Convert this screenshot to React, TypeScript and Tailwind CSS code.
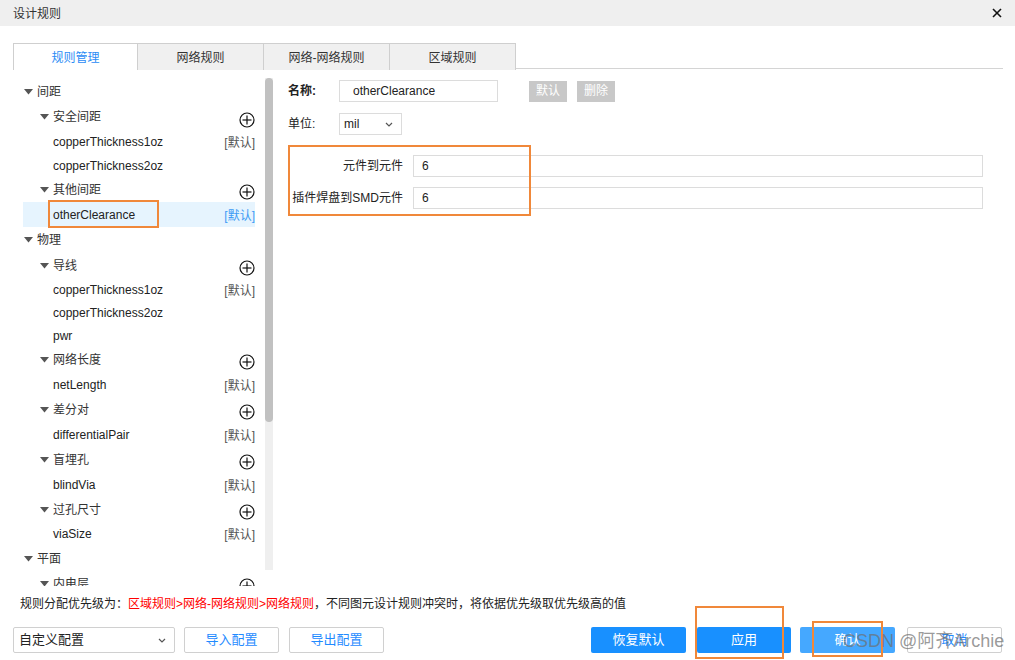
import React from 'react'

type Row = {
  kind: 'g0' | 'g1' | 'leaf'
  label: string
  h: number
  plus?: boolean
  def?: boolean
  selected?: boolean
}

const rows: Row[] = [
  { kind: 'g0', label: '间距', h: 25 },
  { kind: 'g1', label: '安全间距', h: 26, plus: true },
  { kind: 'leaf', label: 'copperThickness1oz', h: 24, def: true },
  { kind: 'leaf', label: 'copperThickness2oz', h: 23 },
  { kind: 'g1', label: '其他间距', h: 25, plus: true },
  { kind: 'leaf', label: 'otherClearance', h: 25, def: true, selected: true },
  { kind: 'g0', label: '物理', h: 26 },
  { kind: 'g1', label: '导线', h: 25, plus: true },
  { kind: 'leaf', label: 'copperThickness1oz', h: 24, def: true },
  { kind: 'leaf', label: 'copperThickness2oz', h: 22 },
  { kind: 'leaf', label: 'pwr', h: 23 },
  { kind: 'g1', label: '网络长度', h: 25, plus: true },
  { kind: 'leaf', label: 'netLength', h: 25, def: true },
  { kind: 'g1', label: '差分对', h: 25, plus: true },
  { kind: 'leaf', label: 'differentialPair', h: 25, def: true },
  { kind: 'g1', label: '盲埋孔', h: 25, plus: true },
  { kind: 'leaf', label: 'blindVia', h: 25, def: true },
  { kind: 'g1', label: '过孔尺寸', h: 25, plus: true },
  { kind: 'leaf', label: 'viaSize', h: 24, def: true },
  { kind: 'g0', label: '平面', h: 25 },
  { kind: 'g1', label: '内电层', h: 25, plus: true },
]

const tabs = ['规则管理', '网络规则', '网络-网络规则', '区域规则']

function Caret() {
  return (
    <svg width="9" height="6" viewBox="0 0 9 6" className="shrink-0">
      <polygon points="0,0 9,0 4.5,5.5" fill="#555" />
    </svg>
  )
}

function PlusCircle() {
  return (
    <svg width="16" height="16" viewBox="0 0 16 16" className="mt-[5px]">
      <circle cx="8" cy="8" r="7" fill="none" stroke="#111" strokeWidth="1.2" />
      <line x1="3.5" y1="8" x2="12.5" y2="8" stroke="#111" strokeWidth="1.2" />
      <line x1="8" y1="3.5" x2="8" y2="12.5" stroke="#111" strokeWidth="1.2" />
    </svg>
  )
}

function Chevron() {
  return (
    <svg width="8" height="5" viewBox="0 0 8 5">
      <polyline points="1,1 4,4 7,1" fill="none" stroke="#555" strokeWidth="1.2" />
    </svg>
  )
}

export default function App() {
  return (
    <div
      className="relative w-[1015px] h-[660px] bg-white overflow-hidden text-[12px] text-[#333]"
      style={{ fontFamily: '"Liberation Sans", "Noto Sans CJK SC", sans-serif' }}
    >
      {/* Title bar */}
      <div className="h-[26px] bg-[#efefef] flex items-center justify-between pl-[13px] pr-[13px]">
        <span className="text-[12px] text-[#333] mt-[1px]">设计规则</span>
        <svg width="10" height="10" viewBox="0 0 10 10">
          <line x1="1" y1="1" x2="9" y2="9" stroke="#111" strokeWidth="1.6" />
          <line x1="9" y1="1" x2="1" y2="9" stroke="#111" strokeWidth="1.6" />
        </svg>
      </div>

      {/* Tabs */}
      <div className="pt-[17px] pl-[13px] pr-[12px]">
        <div className="flex h-[26px] border-b border-[#d4d4d4]">
          {tabs.map((t, i) => (
            <div
              key={t}
              className={`h-[27px] flex items-center justify-center text-[12px] border-t border-r border-[#cfcfcf] ${
                i === 0 ? 'w-[125px] bg-white text-[#2b8cf5] border-l' : 'w-[126px] bg-[#f0f0f0] text-[#333] h-[26px]'
              }`}
            >
              <span className="mt-[2px]">{t}</span>
            </div>
          ))}
        </div>
      </div>

      {/* Main */}
      <div className="flex h-[521px]">
        {/* Tree */}
        <div className="w-[232px] ml-[23px] mt-[10px] h-[507px] overflow-hidden">
          {rows.map((r, i) => (
            <div
              key={i}
              className={`flex items-center justify-between ${r.selected ? 'bg-[#e6f4fe]' : ''}`}
              style={{ height: r.h }}
            >
              <div
                className={`flex items-center gap-[4px] ${
                  r.kind === 'g0' ? 'pl-[1px]' : r.kind === 'g1' ? 'pl-[17px]' : 'pl-[30px]'
                }`}
              >
                {r.kind !== 'leaf' && <Caret />}
                <span className={r.kind === 'leaf' ? 'text-[#222]' : 'text-[#333]'}>{r.label}</span>
              </div>
              <div className="flex items-center">
                {r.plus && <PlusCircle />}
                {r.def && (
                  <span className={`mt-[2px] ${r.selected ? 'text-[#3d9bf5]' : 'text-[#555]'}`}>[默认]</span>
                )}
              </div>
            </div>
          ))}
        </div>

        {/* Scrollbar */}
        <div className="w-[8px] h-[492px] ml-[10px] mt-[9px] bg-[#efefef] flex flex-col">
          <div className="h-[344px] bg-[#c1c1c1] rounded-[4px]" />
        </div>

        {/* Right form */}
        <div className="flex-1 pl-[15px] pt-[11px]">
          <div className="flex items-center h-[22px]">
            <span className="w-[51px] font-bold text-[#222]">名称:</span>
            <div className="w-[159px] h-[22px] border border-[#dcdcdc] flex items-center pl-[13px] text-[#222]">
              otherClearance
            </div>
            <div className="ml-[31px] w-[38px] h-[21px] bg-[#c8c8c8] text-white flex items-center justify-center">
              默认
            </div>
            <div className="ml-[10px] w-[38px] h-[21px] bg-[#c8c8c8] text-white flex items-center justify-center">
              删除
            </div>
          </div>
          <div className="flex items-center h-[22px] mt-[11px]">
            <span className="w-[51px] text-[#222]">单位:</span>
            <div className="w-[63px] h-[22px] border border-[#dcdcdc] flex items-center justify-between pl-[4px] pr-[8px] text-[#222]">
              <span>mil</span>
              <Chevron />
            </div>
          </div>
          <div className="flex items-center h-[22px] mt-[20px]">
            <span className="w-[115px] text-right text-[#222]">元件到元件</span>
            <div className="ml-[10px] w-[570px] h-[22px] border border-[#dcdcdc] flex items-center pl-[8px] text-[#222]">
              6
            </div>
          </div>
          <div className="flex items-center h-[22px] mt-[10px]">
            <span className="w-[115px] text-right text-[#222] whitespace-nowrap">插件焊盘到SMD元件</span>
            <div className="ml-[10px] w-[570px] h-[22px] border border-[#dcdcdc] flex items-center pl-[8px] text-[#222]">
              6
            </div>
          </div>
        </div>
      </div>

      {/* Priority note */}
      <div className="h-[26px] flex items-center pl-[20px] pt-[2px] text-[12px] text-[#222]">
        <span>规则分配优先级为：</span>
        <span className="text-[#ff0000]">区域规则&gt;网络-网络规则&gt;网络规则</span>
        <span>，不同图元设计规则冲突时，将依据优先级取优先级高的值</span>
      </div>

      {/* Bottom bar */}
      <div className="flex items-center h-[26px] mt-[11px] pl-[13px]">
        <div className="w-[162px] h-[26px] border border-[#d0d0d0] rounded-[2px] flex items-center justify-between pl-[5px] pr-[8px] text-[13px] text-[#222]">
          <span>自定义配置</span>
          <Chevron />
        </div>
        <div className="ml-[9px] w-[95px] h-[26px] border border-[#d0d0d0] rounded-[2px] flex items-center justify-center text-[13px] text-[#1f8bff]">
          导入配置
        </div>
        <div className="ml-[10px] w-[95px] h-[26px] border border-[#d0d0d0] rounded-[2px] flex items-center justify-center text-[13px] text-[#1f8bff]">
          导出配置
        </div>
        <div className="ml-[207px] w-[95px] h-[26px] bg-[#1890ff] rounded-[2px] flex items-center justify-center text-[13px] text-white">
          恢复默认
        </div>
        <div className="ml-[11px] w-[94px] h-[26px] bg-[#1890ff] rounded-[2px] flex items-center justify-center text-[13px] text-white">
          应用
        </div>
        <div className="ml-[9px] w-[95px] h-[26px] bg-[#45a8ff] rounded-[2px] flex items-center justify-center text-[13px] text-white">
          确认
        </div>
        <div className="ml-[12px] w-[95px] h-[26px] border border-[#d0d0d0] rounded-[2px] flex items-center justify-center text-[13px] text-[#1f8bff]">
          取消
        </div>
      </div>

      {/* Annotation boxes */}
      <div className="absolute left-[48px] top-[200px] w-[111px] h-[28px] border-2 border-[#f0883a]" />
      <div className="absolute left-[288px] top-[145px] w-[243px] h-[71px] border-2 border-[#f0883a]" />
      <div className="absolute left-[695px] top-[606px] w-[89px] h-[53px] border-2 border-[#f0883a]" />
      <div className="absolute left-[812px] top-[621px] w-[71px] h-[36px] border-2 border-[#f0883a]" />

      {/* Watermark */}
      <div className="absolute left-[843px] top-[629px] text-[18px] leading-[24px] text-[rgba(110,110,110,0.7)] whitespace-nowrap">
        CSDN @阿齐Archie
      </div>
    </div>
  )
}
